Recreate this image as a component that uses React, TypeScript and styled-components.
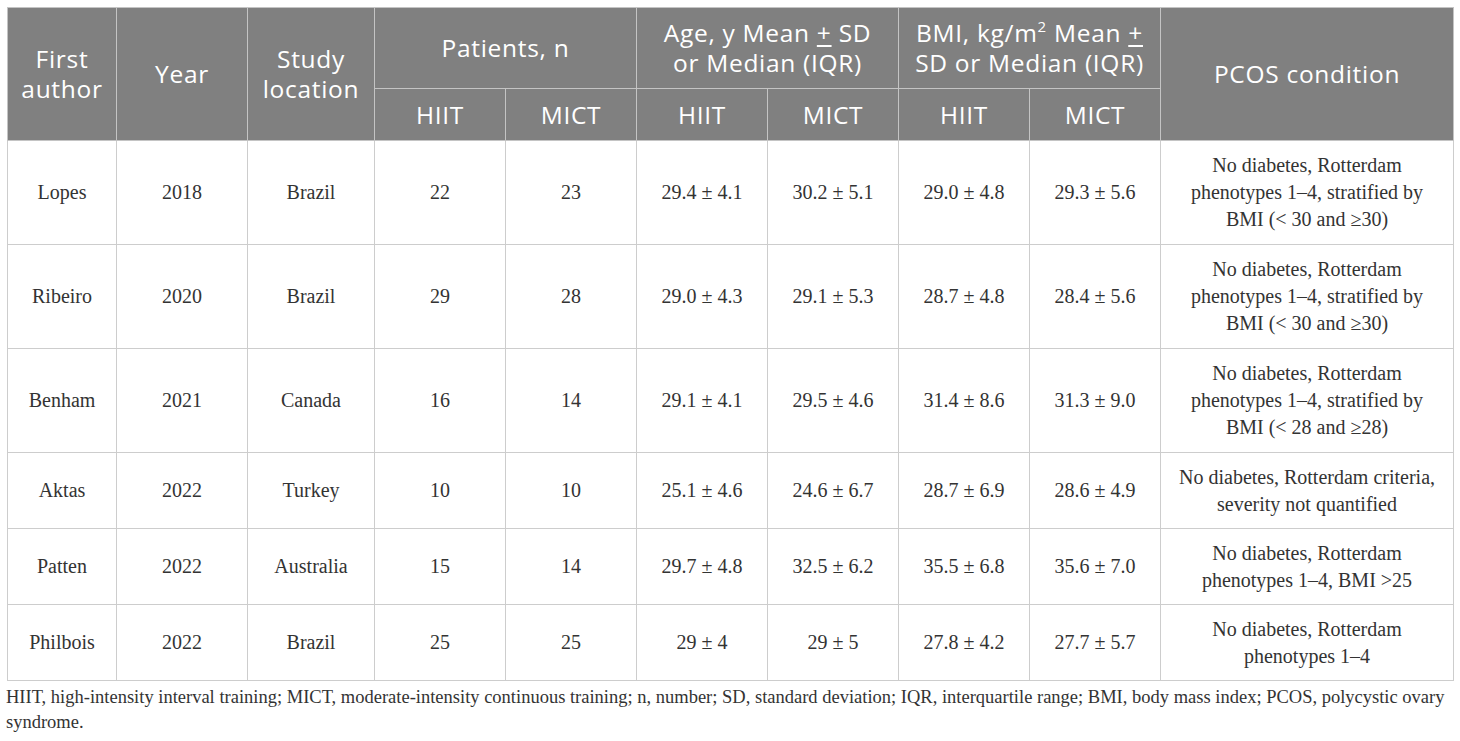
import React from "react";
import styled, { createGlobalStyle } from "styled-components";

const Global = createGlobalStyle`
  html, body { margin: 0; padding: 0; background: #ffffff; }
  body { font-family: "Liberation Serif", "Times New Roman", serif; }
`;

const Page = styled.div`
  padding: 7px 7px 0 7px;
  width: 1446px;
`;

const Table = styled.table`
  border-collapse: collapse;
  table-layout: fixed;
  width: 1446px;
`;

const Th = styled.th<{ $h?: number }>`
  background: #808080;
  color: #ffffff;
  font-family: "Open Sans", "Noto Sans", sans-serif;
  font-weight: 400;
  font-size: 24.5px;
  letter-spacing: 0.7px;
  line-height: 30px;
  text-align: center;
  vertical-align: middle;
  border: 1px solid #c4c4c4;
  padding: 0 2px;
  height: ${(p) => (p.$h ? `${p.$h}px` : "auto")};
  box-sizing: border-box;
  white-space: nowrap;

  sup {
    font-size: 15px;
    line-height: 0;
    vertical-align: 10px;
  }
  u {
    text-underline-offset: 3px;
    text-decoration-thickness: 1.5px;
  }
`;

const Td = styled.td<{ $h: number }>`
  font-family: "Liberation Serif", "Times New Roman", serif;
  font-size: 20px;
  line-height: 27px;
  color: #333333;
  text-align: center;
  vertical-align: middle;
  border: 1px solid #cdcdcd;
  padding: 0 6px;
  height: ${(p) => p.$h}px;
  box-sizing: border-box;
`;

const Note = styled.p`
  margin: 4px 0 0 -1px;
  width: 1452px;
  font-family: "Liberation Serif", "Times New Roman", serif;
  font-size: 18.5px;
  line-height: 25px;
  color: #333333;
`;

type Row = {
  author: string;
  year: string;
  loc: string;
  pH: string;
  pM: string;
  aH: string;
  aM: string;
  bH: string;
  bM: string;
  cond: string[];
};

const rows: Row[] = [
  {
    author: "Lopes", year: "2018", loc: "Brazil", pH: "22", pM: "23",
    aH: "29.4 ± 4.1", aM: "30.2 ± 5.1", bH: "29.0 ± 4.8", bM: "29.3 ± 5.6",
    cond: ["No diabetes, Rotterdam", "phenotypes 1–4, stratified by", "BMI (< 30 and ≥30)"],
  },
  {
    author: "Ribeiro", year: "2020", loc: "Brazil", pH: "29", pM: "28",
    aH: "29.0 ± 4.3", aM: "29.1 ± 5.3", bH: "28.7 ± 4.8", bM: "28.4 ± 5.6",
    cond: ["No diabetes, Rotterdam", "phenotypes 1–4, stratified by", "BMI (< 30 and ≥30)"],
  },
  {
    author: "Benham", year: "2021", loc: "Canada", pH: "16", pM: "14",
    aH: "29.1 ± 4.1", aM: "29.5 ± 4.6", bH: "31.4 ± 8.6", bM: "31.3 ± 9.0",
    cond: ["No diabetes, Rotterdam", "phenotypes 1–4, stratified by", "BMI (< 28 and ≥28)"],
  },
  {
    author: "Aktas", year: "2022", loc: "Turkey", pH: "10", pM: "10",
    aH: "25.1 ± 4.6", aM: "24.6 ± 6.7", bH: "28.7 ± 6.9", bM: "28.6 ± 4.9",
    cond: ["No diabetes, Rotterdam criteria,", "severity not quantified"],
  },
  {
    author: "Patten", year: "2022", loc: "Australia", pH: "15", pM: "14",
    aH: "29.7 ± 4.8", aM: "32.5 ± 6.2", bH: "35.5 ± 6.8", bM: "35.6 ± 7.0",
    cond: ["No diabetes, Rotterdam", "phenotypes 1–4, BMI >25"],
  },
  {
    author: "Philbois", year: "2022", loc: "Brazil", pH: "25", pM: "25",
    aH: "29 ± 4", aM: "29 ± 5", bH: "27.8 ± 4.2", bM: "27.7 ± 5.7",
    cond: ["No diabetes, Rotterdam", "phenotypes 1–4"],
  },
];

const widths = [109, 131, 127, 131, 131, 131, 131, 131, 131, 293];

export default function App() {
  return (
    <>
      <Global />
      <Page>
        <Table>
          <colgroup>
            {widths.map((w, i) => (
              <col key={i} style={{ width: w }} />
            ))}
          </colgroup>
          <thead>
            <tr>
              <Th rowSpan={2}>First<br />author</Th>
              <Th rowSpan={2}>Year</Th>
              <Th rowSpan={2}>Study<br />location</Th>
              <Th colSpan={2} $h={81}>Patients, n</Th>
              <Th colSpan={2} $h={81}>Age, y Mean <u>+</u> SD<br />or Median (IQR)</Th>
              <Th colSpan={2} $h={81}>BMI, kg/m<sup>2</sup> Mean <u>+</u><br />SD or Median (IQR)</Th>
              <Th rowSpan={2}>PCOS condition</Th>
            </tr>
            <tr>
              <Th $h={52}>HIIT</Th>
              <Th $h={52}>MICT</Th>
              <Th $h={52}>HIIT</Th>
              <Th $h={52}>MICT</Th>
              <Th $h={52}>HIIT</Th>
              <Th $h={52}>MICT</Th>
            </tr>
          </thead>
          <tbody>
            {rows.map((r) => {
              const h = r.cond.length === 3 ? 104 : 76;
              return (
                <tr key={r.author}>
                  <Td $h={h}>{r.author}</Td>
                  <Td $h={h}>{r.year}</Td>
                  <Td $h={h}>{r.loc}</Td>
                  <Td $h={h}>{r.pH}</Td>
                  <Td $h={h}>{r.pM}</Td>
                  <Td $h={h}>{r.aH}</Td>
                  <Td $h={h}>{r.aM}</Td>
                  <Td $h={h}>{r.bH}</Td>
                  <Td $h={h}>{r.bM}</Td>
                  <Td $h={h}>
                    {r.cond.map((c, i) => (
                      <React.Fragment key={i}>
                        {i > 0 && <br />}
                        {c}
                      </React.Fragment>
                    ))}
                  </Td>
                </tr>
              );
            })}
          </tbody>
        </Table>
        <Note>
          HIIT, high-intensity interval training; MICT, moderate-intensity continuous training; n, number; SD,
          standard deviation; IQR, interquartile range; BMI, body mass index; PCOS, polycystic ovary syndrome.
        </Note>
      </Page>
    </>
  );
}
